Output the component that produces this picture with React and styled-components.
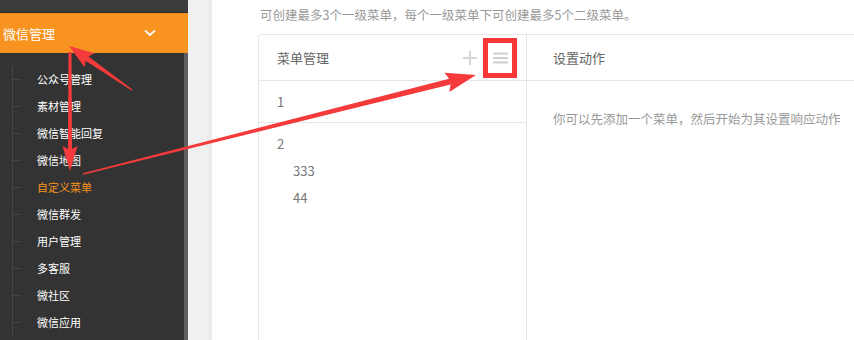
import React from 'react';
import styled, { createGlobalStyle } from 'styled-components';

const GlobalStyle = createGlobalStyle`
  html, body, #root {
    margin: 0;
    height: 100%;
    overflow: hidden;
  }
  body {
    font-family: "Noto Sans CJK SC", "Noto Sans", sans-serif;
    background: #fff;
  }
`;

const Page = styled.div`
  position: relative;
  display: flex;
  height: 340px;
  width: 854px;
`;

const Sidebar = styled.div`
  width: 188px;
  flex-shrink: 0;
  display: flex;
  flex-direction: column;
  background-color: #333;
`;

const TopBar = styled.div`
  height: 12px;
  background-color: #3c3c3c;
  border-bottom: 1px solid #2b2b2b;
`;

const GroupHeader = styled.div`
  height: 40px;
  background-color: #f7931e;
  display: flex;
  align-items: center;
  justify-content: space-between;
  padding: 0 32px 0 3px;
  color: #fff;
  font-size: 13px;
`;

const SubArea = styled.div`
  flex: 1;
  border-right: 4px solid #5f5f5f;
  padding: 13px 0 0 12px;
`;

const Tree = styled.ul`
  list-style: none;
  margin: 0;
  padding: 0;
  border-left: 1px solid #454545;
`;

const SubItem = styled.li`
  position: relative;
  height: 27px;
  line-height: 27px;
  padding-left: 24px;
  font-size: 11px;
  color: ${(p) => (p.active ? '#f7931e' : '#fff')};

  &::before {
    content: '';
    position: absolute;
    left: 0;
    top: 13px;
    width: 8px;
    height: 1px;
    background-color: #454545;
  }
`;

const Gutter = styled.div`
  width: 24px;
  flex-shrink: 0;
  background: linear-gradient(to right, #f0f0f0 75%, #ebebeb);
`;

const Main = styled.div`
  flex: 1;
  min-width: 0;
  overflow: hidden;
  padding: 5px 0 0 46px;
`;

const Tip = styled.p`
  margin: 0 0 0 2px;
  height: 19px;
  line-height: 19px;
  font-size: 12.5px;
  color: #999;
  white-space: nowrap;
`;

const Card = styled.div`
  margin-top: 10px;
  width: 700px;
  height: 320px;
  display: flex;
  border: 1px solid #e6e6e6;
  border-radius: 3px;
`;

const LeftCol = styled.div`
  width: 267px;
  flex-shrink: 0;
  border-right: 1px solid #e6e6e6;
`;

const RightCol = styled.div`
  flex: 1;
`;

const ColHeader = styled.div`
  height: 45px;
  display: flex;
  align-items: center;
  justify-content: space-between;
  padding: 0 9px 0 ${(p) => p.pad}px;
  border-bottom: 1px solid #e6e6e6;
  font-size: 13px;
  color: #666;
`;

const Tools = styled.div`
  display: flex;
  align-items: center;
  gap: 6px;
`;

const ToolButton = styled.span`
  display: flex;
  align-items: center;
  justify-content: center;
  box-sizing: border-box;
  width: ${(p) => (p.marked ? 34 : 14)}px;
  height: ${(p) => (p.marked ? 40 : 14)}px;
  border: ${(p) => (p.marked ? '5px solid #f63838' : 'none')};
`;

const MenuRow = styled.div`
  padding: 0 18px;
  border-bottom: ${(p) => (p.divided ? '1px solid #e6e6e6' : 'none')};
  padding-top: ${(p) => p.top || 0}px;
  padding-bottom: ${(p) => p.bottom || 0}px;
`;

const MenuName = styled.div`
  height: 27px;
  line-height: 27px;
  font-size: 13px;
  color: #777;
  padding-left: ${(p) => (p.child ? 16 : 0)}px;
`;

const Hint = styled.p`
  margin: 0;
  padding: 28px 0 0 26px;
  font-size: 12.5px;
  color: #999;
  white-space: nowrap;
`;

const Overlay = styled.svg`
  position: absolute;
  left: 0;
  top: 0;
  pointer-events: none;
`;

// tapered arrow with a triangular head, as a single polygon
const arrowPoints = (tail, tip, tw, sw, hl, hw) => {
  const dx = tip[0] - tail[0];
  const dy = tip[1] - tail[1];
  const len = Math.hypot(dx, dy);
  const ux = dx / len;
  const uy = dy / len;
  const nx = -uy;
  const ny = ux;
  const neck = [tip[0] - ux * hl, tip[1] - uy * hl];
  const barb = [tip[0] - ux * (hl + 3), tip[1] - uy * (hl + 3)];
  const p = (b, w) => `${b[0] + nx * w},${b[1] + ny * w}`;
  return [
    p(tail, tw / 2),
    p(neck, sw / 2),
    p(barb, hw / 2),
    `${tip[0]},${tip[1]}`,
    p(barb, -hw / 2),
    p(neck, -sw / 2),
    p(tail, -tw / 2),
  ].join(' ');
};

const subItems = [
  '公众号管理',
  '素材管理',
  '微信智能回复',
  '微信地图',
  '自定义菜单',
  '微信群发',
  '用户管理',
  '多客服',
  '微社区',
  '微信应用',
];

const App = () => {
  return (
    <>
      <GlobalStyle />
      <Page>
        <Sidebar>
          <TopBar />
          <GroupHeader>
            <span>微信管理</span>
            <svg width="12" height="8" viewBox="0 0 12 8">
              <path d="M1 1.5 L6 6 L11 1.5" fill="none" stroke="#fff" strokeWidth="1.8" />
            </svg>
          </GroupHeader>
          <SubArea>
            <Tree>
              {subItems.map((name) => (
                <SubItem key={name} active={name === '自定义菜单'}>
                  {name}
                </SubItem>
              ))}
            </Tree>
          </SubArea>
        </Sidebar>
        <Gutter />
        <Main>
          <Tip>可创建最多3个一级菜单，每个一级菜单下可创建最多5个二级菜单。</Tip>
          <Card>
            <LeftCol>
              <ColHeader pad={18}>
                <span>菜单管理</span>
                <Tools>
                  <ToolButton>
                    <svg width="14" height="14" viewBox="0 0 14 14">
                      <path d="M7 0 V14 M0 7 H14" stroke="#d6d6d6" strokeWidth="2" />
                    </svg>
                  </ToolButton>
                  <ToolButton marked>
                    <svg width="15" height="12" viewBox="0 0 15 12">
                      <path d="M0 1.5 H15 M0 6 H15 M0 10.5 H15" stroke="#cfcfcf" strokeWidth="2" />
                    </svg>
                  </ToolButton>
                </Tools>
              </ColHeader>
              <MenuRow divided top={7} bottom={7}>
                <MenuName>1</MenuName>
              </MenuRow>
              <MenuRow top={7}>
                <MenuName>2</MenuName>
                <MenuName child>333</MenuName>
                <MenuName child>44</MenuName>
              </MenuRow>
            </LeftCol>
            <RightCol>
              <ColHeader pad={26}>
                <span>设置动作</span>
              </ColHeader>
              <Hint>你可以先添加一个菜单，然后开始为其设置响应动作</Hint>
            </RightCol>
          </Card>
        </Main>
        <Overlay width="854" height="340">
          <polygon points={arrowPoints([132, 90], [69, 46], 1.5, 5, 22, 17)} fill="#f43a3a" />
          <polygon points={arrowPoints([70, 52], [70, 171], 3, 4, 22, 15)} fill="#f43a3a" />
          <polygon points={arrowPoints([83, 174], [476, 75], 1.5, 6, 27, 20)} fill="#f43a3a" />
        </Overlay>
      </Page>
    </>
  );
};

export default App;
